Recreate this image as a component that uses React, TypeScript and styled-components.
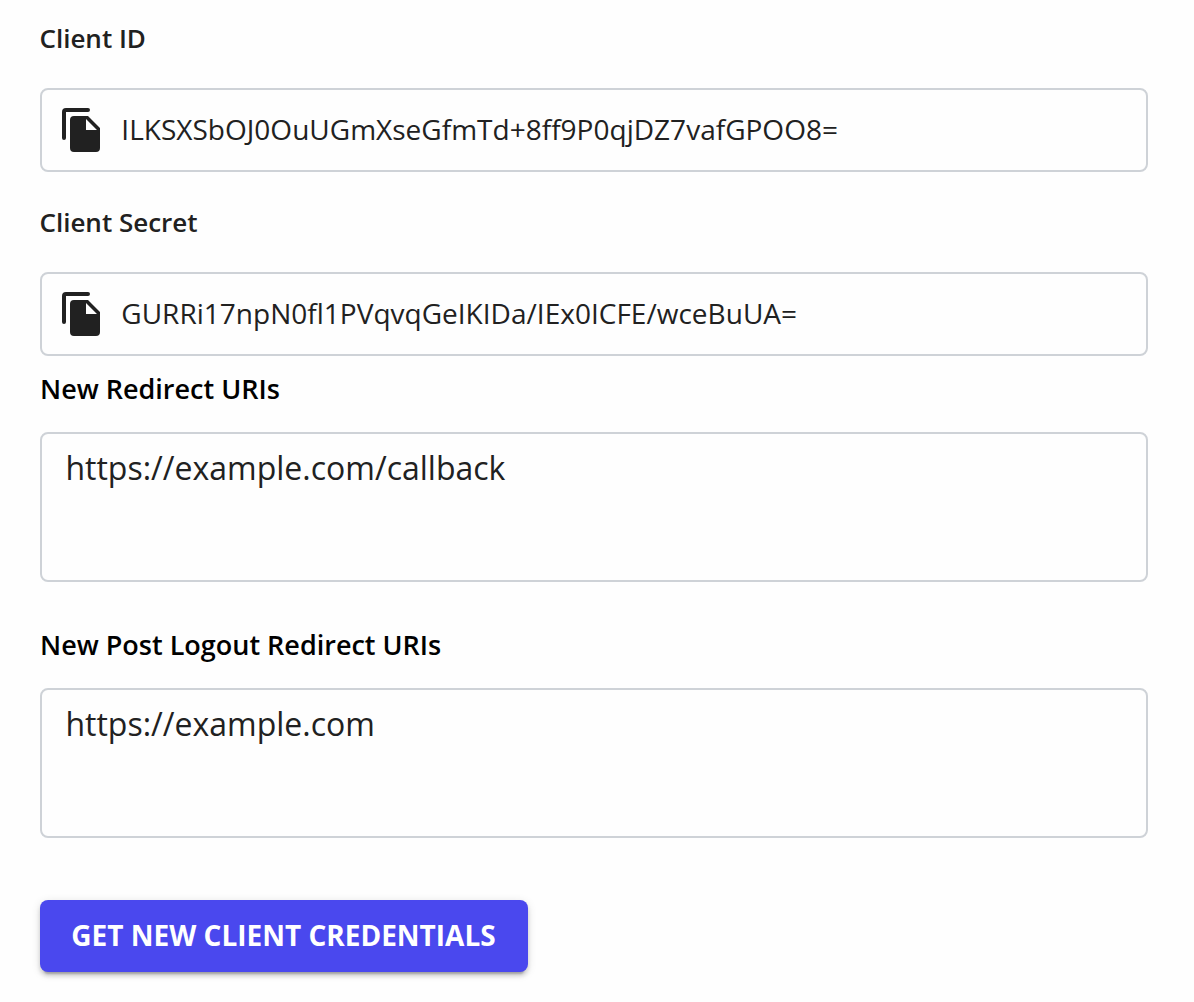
import React from "react";
import styled, { createGlobalStyle } from "styled-components";

const Global = createGlobalStyle`
  body { margin: 0; background: #fefefe; }
  * { box-sizing: border-box; }
`;

const Page = styled.main`
  width: 1194px;
  height: 1002px;
  padding: 19px 46px 0 40px;
  overflow: hidden;
  display: flex;
  flex-direction: column;
  align-items: stretch;
  font-family: "Open Sans", sans-serif;
  color: #212121;
`;

const Label = styled.label`
  display: block;
  height: 38px;
  line-height: 38px;
  margin: 0 0 31px -0.6px;
  font-size: 26px;
  font-weight: 600;
  color: #212121;
  white-space: nowrap;
`;

const FormLabel = styled(Label)`
  height: 39px;
  line-height: 39px;
  margin: 0 0 24px;
  font-size: 27px;
  color: #000;
`;

const CopyField = styled.div<{ $after: number }>`
  display: flex;
  align-items: center;
  height: 84px;
  margin-bottom: ${(p) => p.$after}px;
  padding-left: 18px;
  border: 2px solid #ced2d7;
  border-radius: 8px;
`;

const CopyIcon = styled.svg`
  width: 44px;
  height: 48px;
  flex: none;
  margin-right: 17.3px;
`;

const Value = styled.span`
  padding-bottom: 2px;
  font-size: 28px;
  line-height: 40px;
  letter-spacing: 0.015px;
  white-space: nowrap;
`;

const Area = styled.div<{ $after: number }>`
  height: 150px;
  margin-bottom: ${(p) => p.$after}px;
  padding: 11px 23.4px;
  border: 2px solid #ced2d7;
  border-radius: 8px;
  font-size: 32px;
  line-height: 45px;
`;

const Button = styled.button`
  align-self: flex-start;
  width: 488px;
  height: 72px;
  padding: 0 1px 2px 0;
  border: 0;
  border-radius: 8px;
  background: #4a48ee;
  color: #fff;
  font: 700 28px/70px "Open Sans", sans-serif;
  white-space: nowrap;
  box-shadow:
    0 6px 2px -4px rgba(0, 0, 0, 0.2),
    0 4px 4px rgba(0, 0, 0, 0.14),
    0 2px 10px rgba(0, 0, 0, 0.12);
`;

const Copy = () => (
  <CopyIcon viewBox="0 0 44 48" fill="#212121">
    <path d="M2 32V6a4 4 0 0 1 4-4h22a2 2 0 0 1 0 4H6v26a2 2 0 0 1-4 0z" />
    <path fillRule="evenodd" d="M14 10h14l12 12v20a4 4 0 0 1-4 4H14a4 4 0 0 1-4-4V14a4 4 0 0 1 4-4zm12 3v11h11z" />
  </CopyIcon>
);

export default function App() {
  return (
    <>
      <Global />
      <Page>
        <Label>Client ID</Label>
        <CopyField $after={31}>
          <Copy />
          <Value>ILKSXSbOJ0OuUGmXseGfmTd+8ff9P0qjDZ7vafGPOO8=</Value>
        </CopyField>
        <Label>Client Secret</Label>
        <CopyField $after={13}>
          <Copy />
          <Value>GURRi17npN0fl1PVqvqGeIKIDa/IEx0ICFE/wceBuUA=</Value>
        </CopyField>
        <FormLabel>New Redirect URIs</FormLabel>
        <Area $after={43}>https://example.com/callback</Area>
        <FormLabel>New Post Logout Redirect URIs</FormLabel>
        <Area $after={62}>https://example.com</Area>
        <Button type="button">GET NEW CLIENT CREDENTIALS</Button>
      </Page>
    </>
  );
}
